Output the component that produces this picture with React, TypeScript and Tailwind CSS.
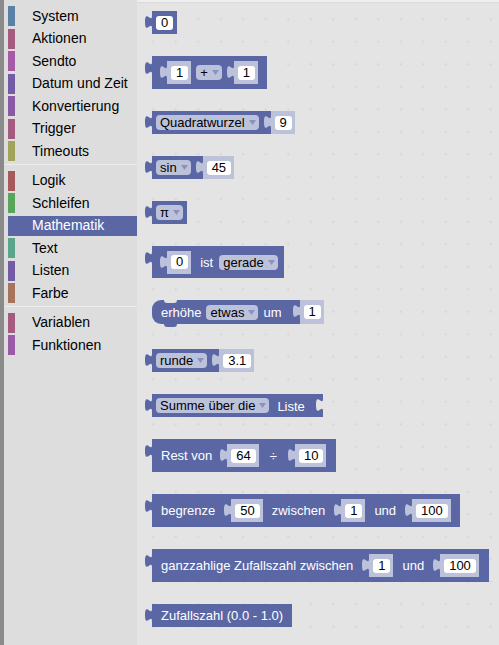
import React from "react";

const MAIN = "#5b67a5";
const LIGHT = "#bdc2db";
const BG = "#e4e4e4";

function Tab({ fill }: { fill: string }) {
  return (
    <svg width="7" height="14" viewBox="0 0 8 15" className="block shrink-0">
      <path d="M8,0 c0,10 -8,-8 -8,7.5 s8,-2.5 8,7.5 Z" fill={fill} />
    </svg>
  );
}

function Arrow() {
  return (
    <svg width="7" height="5" viewBox="0 0 7 5" className="block shrink-0 ml-[4px]">
      <path d="M0,0 H7 L3.5,5 Z" fill="#8b92c2" />
    </svg>
  );
}

function Field({ children }: { children: React.ReactNode }) {
  return (
    <span className="flex items-center h-[14px] px-[5px] rounded-[3px] bg-white text-black text-[13px] leading-[14px] whitespace-nowrap">
      {children}
    </span>
  );
}

function Dropdown({ children }: { children: React.ReactNode }) {
  return (
    <span className="flex items-center h-[15px] pl-[4px] pr-[3px] rounded-[4px] bg-[#bdc2db] text-black text-[13px] leading-[15px] whitespace-nowrap">
      {children}
      <Arrow />
    </span>
  );
}

function Label({ children }: { children: React.ReactNode }) {
  return <span className="text-white text-[13px] leading-[15px] whitespace-nowrap">{children}</span>;
}

function InlineShadow({ children }: { children: React.ReactNode }) {
  return (
    <div className="flex h-[23px]">
      <div className="pt-[4px]">
        <Tab fill={LIGHT} />
      </div>
      <div className="flex items-center h-full bg-[#bdc2db] pl-[4px] pr-[3px]">
        <Field>{children}</Field>
      </div>
    </div>
  );
}

function ShadowTab() {
  return (
    <div className="self-start pt-[4px]">
      <Tab fill={LIGHT} />
    </div>
  );
}

function ExtShadow({ children }: { children: React.ReactNode }) {
  return (
    <div className="flex items-center h-[23px] bg-[#bdc2db] pl-[4px] pr-[3px]">
      <Field>{children}</Field>
    </div>
  );
}

function Block({
  children,
  tall,
  after,
  body,
}: {
  children: React.ReactNode;
  tall?: boolean;
  after?: React.ReactNode;
  body: string;
}) {
  return (
    <div className="flex items-start">
      <div className={tall ? "pt-[5px]" : "pt-[4px]"}>
        <Tab fill={MAIN} />
      </div>
      <div className={body}>{children}</div>
      {after}
    </div>
  );
}

const cats: { label: string; color: string; sep?: boolean }[] = [
  { label: "System", color: "#5b80a5" },
  { label: "Aktionen", color: "#a55b80" },
  { label: "Sendto", color: "#a55ba5" },
  { label: "Datum und Zeit", color: "#745ba5" },
  { label: "Konvertierung", color: "#8a5ba5" },
  { label: "Trigger", color: "#a55b80" },
  { label: "Timeouts", color: "#a0a55b", sep: true },
  { label: "Logik", color: "#a55b5b" },
  { label: "Schleifen", color: "#5ba55b" },
  { label: "Mathematik", color: "#5b67a5" },
  { label: "Text", color: "#5ba58c" },
  { label: "Listen", color: "#745ba5" },
  { label: "Farbe", color: "#a5745b", sep: true },
  { label: "Variablen", color: "#a55b80" },
  { label: "Funktionen", color: "#995ba5" },
];

export default function App() {
  return (
    <div
      className="flex w-[499px] h-[645px] overflow-hidden"
      style={{ fontFamily: '"Liberation Sans", Arial, sans-serif' }}
    >
      <div className="w-[4px] shrink-0 bg-[#8a8a8a]" />
      <div className="w-[133px] shrink-0 bg-[#dddddd] pt-[6px] pl-[4px]">
        {cats.map((c) => {
          const sel = c.label === "Mathematik";
          return (
            <React.Fragment key={c.label}>
              <div
                className={
                  sel
                    ? "flex items-center h-[20px] mb-[2.5px] bg-[#5b67a5]"
                    : "flex items-center h-[20px] mb-[2.5px]"
                }
              >
                <div className="w-[7px] h-full" style={{ backgroundColor: c.color }} />
                <span
                  className={
                    sel
                      ? "ml-[17px] text-[14px] text-white whitespace-nowrap"
                      : "ml-[17px] text-[14px] text-black whitespace-nowrap"
                  }
                >
                  {c.label}
                </span>
              </div>
              {c.sep && <div className="h-[7px] -ml-[4px] border-t border-[#ececec]" />}
            </React.Fragment>
          );
        })}
      </div>
      <div className="flex-1 flex flex-col bg-[#e4e4e4]">
        <div className="h-[3px] shrink-0 bg-[#efefef] border-b border-[#dadada]" />
        <div className="flex-1 flex flex-col items-start gap-[22px] pt-[8px] pl-[8px] bg-[radial-gradient(circle,#d3d3d3_0.8px,transparent_1.3px)] bg-[length:22.5px_22.5px] bg-[position:5px_5px]">
          <Block body="flex items-center h-[23px] bg-[#5b67a5] px-[4px]">
            <Field>0</Field>
          </Block>

          <Block tall body="flex items-center h-[33px] bg-[#5b67a5] pl-[8px] pr-[9px] gap-[5px]">
            <InlineShadow>1</InlineShadow>
            <Dropdown>+</Dropdown>
            <InlineShadow>1</InlineShadow>
          </Block>

          <Block
            body="flex items-center h-[23px] bg-[#5b67a5] pl-[4px] gap-[5px]"
            after={<ExtShadow>9</ExtShadow>}
          >
            <Dropdown>Quadratwurzel</Dropdown>
            <ShadowTab />
          </Block>

          <Block
            body="flex items-center h-[23px] bg-[#5b67a5] pl-[4px] gap-[5px]"
            after={<ExtShadow>45</ExtShadow>}
          >
            <Dropdown>sin</Dropdown>
            <ShadowTab />
          </Block>

          <Block body="flex items-center h-[23px] bg-[#5b67a5] px-[4px]">
            <Dropdown>π</Dropdown>
          </Block>

          <Block tall body="flex items-center h-[32px] bg-[#5b67a5] pl-[8px] pr-[6px]">
            <InlineShadow>0</InlineShadow>
            <span className="ml-[9px] mr-[6px]">
              <Label>ist</Label>
            </span>
            <Dropdown>gerade</Dropdown>
          </Block>

          <div className="flex flex-col ml-[7px]">
            <div className="flex items-start">
              <div className="relative flex items-center h-[24px] bg-[#5b67a5] rounded-l-[9px] pl-[9px] gap-[5px]">
                <div className="absolute left-[12px] top-0 w-[13px] h-[3px] bg-[#e4e4e4] rounded-b-[3px]" />
                <Label>erhöhe</Label>
                <Dropdown>etwas</Dropdown>
                <Label>um</Label>
                <div className="ml-[6px] self-start pt-[4px]">
                  <Tab fill={LIGHT} />
                </div>
              </div>
              <div className="flex items-center h-[24px] bg-[#bdc2db] pl-[4px] pr-[3px]">
                <Field>1</Field>
              </div>
            </div>
            <div className="ml-[12px] w-[13px] h-[3px] bg-[#5b67a5] rounded-b-[3px]" />
          </div>

          <Block
            body="flex items-center h-[23px] bg-[#5b67a5] pl-[4px] gap-[5px]"
            after={<ExtShadow>3.1</ExtShadow>}
          >
            <Dropdown>runde</Dropdown>
            <ShadowTab />
          </Block>

          <Block body="flex items-center h-[23px] bg-[#5b67a5] pl-[4px]">
            <Dropdown>Summe über die</Dropdown>
            <span className="ml-[8px] mr-[11px]">
              <Label>Liste</Label>
            </span>
            <div className="self-start pt-[4px]">
              <Tab fill={BG} />
            </div>
          </Block>

          <Block tall body="flex items-center h-[33px] bg-[#5b67a5] pl-[9px] pr-[10px] gap-[8px]">
            <Label>Rest von</Label>
            <InlineShadow>64</InlineShadow>
            <span className="mx-[3px]">
              <Label>÷</Label>
            </span>
            <InlineShadow>10</InlineShadow>
          </Block>

          <Block tall body="flex items-center h-[33px] bg-[#5b67a5] pl-[9px] pr-[9px] gap-[9px]">
            <Label>begrenze</Label>
            <InlineShadow>50</InlineShadow>
            <Label>zwischen</Label>
            <InlineShadow>1</InlineShadow>
            <Label>und</Label>
            <InlineShadow>100</InlineShadow>
          </Block>

          <Block tall body="flex items-center h-[33px] bg-[#5b67a5] pl-[9px] pr-[10px] gap-[9px]">
            <Label>ganzzahlige Zufallszahl zwischen</Label>
            <InlineShadow>1</InlineShadow>
            <Label>und</Label>
            <InlineShadow>100</InlineShadow>
          </Block>

          <Block body="flex items-center h-[23px] bg-[#5b67a5] pl-[9px] pr-[9px]">
            <Label>Zufallszahl (0.0 - 1.0)</Label>
          </Block>
        </div>
      </div>
    </div>
  );
}
